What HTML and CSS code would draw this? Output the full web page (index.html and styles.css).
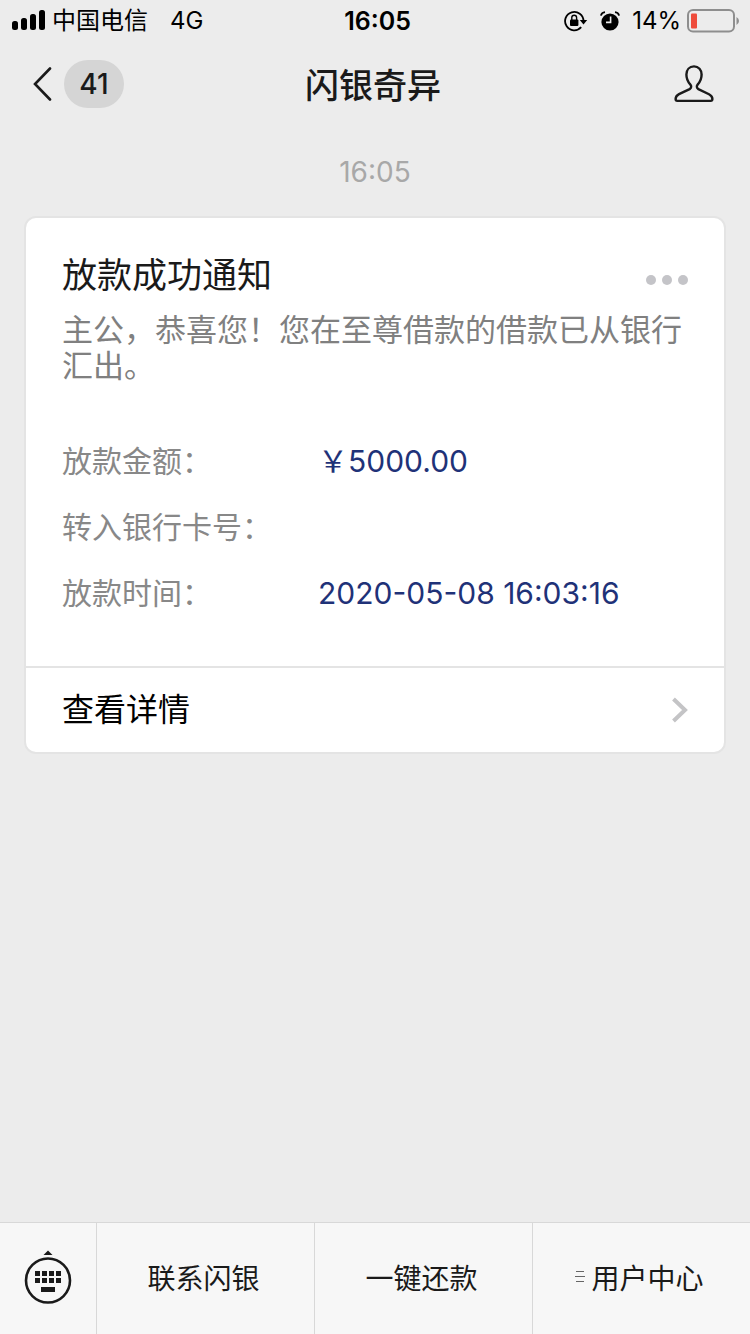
FILE: index.html
```html
<!DOCTYPE html>
<html lang="zh-CN">
<head>
<meta charset="utf-8">
<meta name="viewport" content="width=device-width, initial-scale=1">
<title>闪银奇异</title>
<link rel="stylesheet" href="styles.css">
</head>
<body>
<div class="status">
  <div class="status-left">
    <svg class="signal" width="34" height="20" viewBox="0 0 34 20" aria-hidden="true"><rect x="0" y="11" width="6" height="9" rx="2.5"/><rect x="9" y="8" width="6" height="12" rx="2.5"/><rect x="18" y="4" width="6" height="16" rx="2.5"/><rect x="27" y="0" width="6" height="20" rx="2.5"/></svg>
    <span class="carrier">中国电信</span>
    <span class="network">4G</span>
  </div>
  <div class="clock">16:05</div>
  <div class="status-right">
    <svg width="24" height="22" viewBox="0 0 24 22" aria-hidden="true"><path d="M17.2 17.2A9.2 9.2 0 1 1 19.5 11" fill="none" stroke="#000" stroke-width="1.8"/><path d="M15.8 10h7.4l-3.7 4.6z"/><rect x="6" y="9.6" width="8.4" height="6.4" rx="1"/><path d="M7.8 10V7.6a2.4 2.4 0 0 1 4.8 0V10" fill="none" stroke="#000" stroke-width="1.4"/></svg>
    <svg class="alarm" width="20" height="20" viewBox="0 0 20 20" aria-hidden="true"><circle cx="10" cy="11" r="8.6"/><path d="M.9 4.6Q1.6 1.6 5 1.2M19.1 4.6Q18.4 1.6 15 1.2" fill="none" stroke="#000" stroke-width="1.8"/><path d="M10.6 5.6V11.4H6" fill="none" stroke="#ececec" stroke-width="1.6"/></svg>
    <span class="percent">14%</span>
    <svg width="52" height="24" viewBox="0 0 52 24" aria-hidden="true"><rect x="1" y="1" width="46" height="21.5" rx="5" fill="none" stroke="#8e8e8e" stroke-width="2"/><rect x="4" y="4.5" width="6" height="15" rx="1" fill="#ee4b3b"/><path d="M49.5 8q2.500 1.500 2.500 4t-2.500 4z" fill="#8e8e8e"/></svg>
  </div>
</div>
<header class="nav">
  <button class="back" type="button" aria-label="返回">
    <svg width="20" height="34" viewBox="0 0 20 34" aria-hidden="true"><path d="M18 1.5 3 17l15 15.5" fill="none" stroke="#1a1a1a" stroke-width="2.600" stroke-linecap="round"/></svg>
    <span class="count">41</span>
  </button>
  <h1 class="title">闪银奇异</h1>
  <button class="profile" type="button" aria-label="资料">
    <svg width="40" height="38" viewBox="0 0 40 38" aria-hidden="true"><path d="M20 1.400c-4.600 0-7.600 3.400-7.600 8.200 0 4.200 1.600 7.400 3.800 9.800 1.500 1.700 1.300 3.600-.6 4.700L5 29.200c-2.400 1.200-3.400 3-3.400 4.900 0 1.200.5 1.800 1.700 1.800h33.400c1.200 0 1.700-.6 1.700-1.800 0-1.900-1-3.700-3.400-4.900l-10.600-5.100c-1.900-1.100-2.100-3-.6-4.700 2.200-2.400 3.800-5.600 3.800-9.800 0-4.800-3-8.200-7.600-8.200z" fill="none" stroke="#1a1a1a" stroke-width="2.400"/></svg>
  </button>
</header>
<main class="chat">
  <time class="stamp">16:05</time>
  <article class="card">
    <div class="card-body">
      <div class="card-head">
        <h2 class="card-title">放款成功通知</h2>
        <button class="more" type="button" aria-label="更多"><span class="dot"></span><span class="dot"></span><span class="dot"></span></button>
      </div>
      <p class="message">主公，恭喜您！您在至尊借款的借款已从银行汇出。</p>
      <dl class="details">
        <dt>放款金额：</dt><dd>￥5000.00</dd>
        <dt>转入银行卡号：</dt><dd></dd>
        <dt>放款时间：</dt><dd>2020-05-08 16:03:16</dd>
      </dl>
    </div>
    <button class="card-link" type="button">
      <span>查看详情</span>
      <svg width="18" height="26" viewBox="0 0 18 26" aria-hidden="true"><path d="M3.500 2 15 13 3.500 24" fill="none" stroke="#c4c4c6" stroke-width="4"/></svg>
    </button>
  </article>
</main>
<footer class="menu">
  <button class="menu-item" type="button" aria-label="键盘">
    <svg width="48" height="56" viewBox="0 0 48 56" aria-hidden="true"><path d="M24 1.500 28.500 6h-9z" fill="#1a1a1a"/><circle cx="24" cy="31.500" r="22" fill="none" stroke="#1a1a1a" stroke-width="2.600"/><path d="M11 22h5v5h-5zM18 22h5v5h-5zM25 22h5v5h-5zM32 22h5v5h-5zM11 29h5v5h-5zM18 29h5v5h-5zM25 29h5v5h-5zM32 29h5v5h-5zM17 38h14v5H17z" fill="#1a1a1a"/></svg>
  </button>
  <button class="menu-item menu-text" type="button">联系闪银</button>
  <button class="menu-item menu-text" type="button">一键还款</button>
  <button class="menu-item menu-text" type="button">
    <svg width="10" height="13" viewBox="0 0 10 13" aria-hidden="true"><path d="M1 1.500h8M0 6.500h10M1 11.500h8" stroke="#666" stroke-width="1"/></svg>
    用户中心
  </button>
</footer>
</body>
</html>
```

FILE: styles.css
```css
* {
  box-sizing: border-box;
}

body {
  display: flex;
  flex-direction: column;
  min-height: 100vh;
  margin: 0;
  background: #ececec;
  color: #1a1a1a;
  font-family: Inter, "Noto Sans CJK SC", sans-serif;
}

button {
  padding: 0;
  border: 0;
  background: none;
  color: inherit;
  font: inherit;
}

svg {
  display: block;
  flex: none;
}

.status {
  display: grid;
  grid-template-columns: 1fr auto 1fr;
  align-items: center;
  height: 42px;
  padding: 0 11px 0 12px;
  color: #000;
  font-size: 24px;
  line-height: 42px;
}

.status-left,
.status-right {
  display: flex;
  align-items: center;
}

.status-right {
  justify-content: flex-end;
}

.signal {
  margin-bottom: 2px;
}

.carrier {
  margin-left: 6px;
}

.network {
  margin-left: 22px;
}

.clock {
  padding-left: 4px;
  font-size: 25px;
  font-weight: 600;
}

.alarm {
  margin: 0 12px;
}

.percent {
  margin-right: 6px;
}

.nav {
  display: grid;
  grid-template-columns: 1fr auto 1fr;
  align-items: center;
  height: 84px;
  padding: 0 36px 0 32px;
}

.back {
  display: flex;
  align-items: center;
  gap: 12px;
}

.count {
  width: 60px;
  border-radius: 24px;
  background: #d5d5d5;
  font-size: 28px;
  font-weight: 500;
  line-height: 48px;
  text-align: center;
}

.title {
  margin: 0;
  padding-top: 4px;
  font-size: 34px;
  font-weight: 500;
  line-height: 48px;
}

.profile {
  justify-self: end;
}

.chat {
  flex: 1;
  padding: 26px 24px;
}

.stamp {
  display: block;
  margin-bottom: 24px;
  color: #a8a8a8;
  font-size: 28px;
  line-height: 40px;
  text-align: center;
}

.card {
  overflow: hidden;
  border: 2px solid #e4e4e4;
  border-radius: 12px;
  background: #fff;
}

.card-body {
  padding: 32px 36px 40px;
}

.card-head {
  display: flex;
  align-items: center;
  justify-content: space-between;
}

.card-title {
  margin: 0;
  font-size: 35px;
  font-weight: 400;
  line-height: 50px;
}

.more {
  display: flex;
  gap: 6px;
  padding-top: 10px;
}

.dot {
  width: 10px;
  height: 10px;
  border-radius: 50%;
  background: #c4c4c8;
}

.message {
  margin: 12px 0 44px;
  color: #808080;
  font-size: 31px;
  line-height: 36px;
}

.details {
  display: grid;
  grid-template-columns: 256px 1fr;
  margin: 0;
  font-size: 30px;
  line-height: 66px;
}

.details dt {
  color: #888;
}

.details dd {
  margin: 0;
  color: #1f3278;
}

.card-link {
  display: flex;
  align-items: center;
  justify-content: space-between;
  width: 100%;
  padding: 0 36px;
  border-top: 2px solid #e4e4e4;
  color: #000;
  font-size: 32px;
  line-height: 84px;
}

.menu {
  display: grid;
  grid-template-columns: 96px 1fr 1fr 1fr;
  height: 112px;
  border-top: 1px solid #d8d8d8;
  background: #f7f7f7;
}

.menu-item {
  display: flex;
  align-items: center;
  justify-content: center;
  gap: 6px;
  padding-bottom: 4px;
  font-size: 28px;
}

.menu-text {
  padding-right: 4px;
  border-left: 1px solid #d8d8d8;
}
```
